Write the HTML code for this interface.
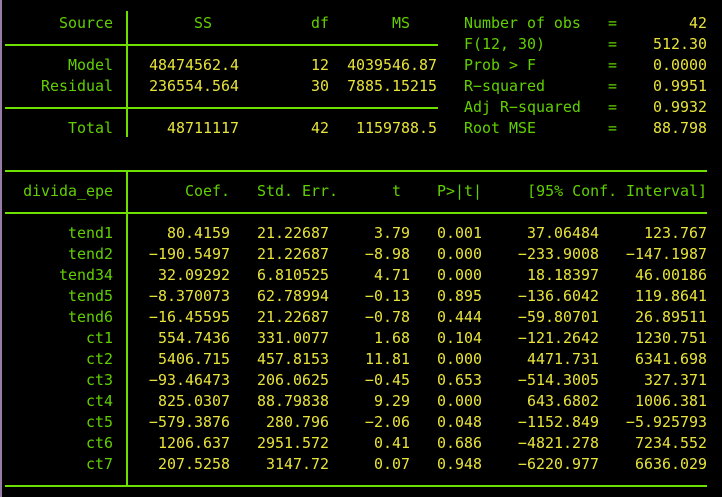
<!DOCTYPE html>
<html><head><meta charset="utf-8"><style>
html,body{margin:0;padding:0;background:#000;width:722px;height:497px;overflow:hidden}
body{position:relative;font-family:"DejaVu Sans Mono","Liberation Mono",monospace;font-size:14.95px;line-height:21px}
.b{position:absolute;left:0;top:0;width:2px;height:497px;background:#9a7aa8}
.h{position:absolute;height:2px;background:#6ee000}
.v{position:absolute;width:2px;background:#6ee000;left:126px}
.r{position:absolute;left:0;width:722px;height:21px}
.r i{position:absolute;font-style:normal;white-space:pre;top:0}
.g{color:#62d000}.y{color:#e8e43a}
.c0{right:609px}.c1{right:492px}.c2{right:393px}.c3{right:312px}.c4{right:240px}.c5{right:123px}.c6{right:15px}
.s1{right:483px}.s2{right:393px}.s3{right:285px}.sl{left:464px}.se{left:608px}
</style></head><body>
<div class="b"></div>
<div class="h" style="left:5px;width:433px;top:44px"></div>
<div class="h" style="left:5px;width:433px;top:107px"></div>
<div class="h" style="left:5px;width:702px;top:170px"></div>
<div class="h" style="left:5px;width:702px;top:212px"></div>
<div class="h" style="left:5px;width:702px;top:485px"></div>
<div class="v" style="top:11px;height:126px"></div>
<div class="v" style="top:170px;height:317px"></div>

<div class="r" style="top:12.5px"><i class="g c0">Source</i><i class="g" style="left:194px">SS</i><i class="g" style="left:311px">df</i><i class="g" style="left:392px">MS</i><i class="g sl">Number of obs</i><i class="g se">=</i><i class="y c6">42</i></div>
<div class="r" style="top:33.5px"><i class="g sl">F(12, 30)</i><i class="g se">=</i><i class="y c6">512.30</i></div>
<div class="r" style="top:54.5px"><i class="g c0">Model</i><i class="y s1">48474562.4</i><i class="y s2">12</i><i class="y s3">4039546.87</i><i class="g sl">Prob &gt; F</i><i class="g se">=</i><i class="y c6">0.0000</i></div>
<div class="r" style="top:75.5px"><i class="g c0">Residual</i><i class="y s1">236554.564</i><i class="y s2">30</i><i class="y s3">7885.15215</i><i class="g sl">R−squared</i><i class="g se">=</i><i class="y c6">0.9951</i></div>
<div class="r" style="top:96.5px"><i class="g sl">Adj R−squared</i><i class="g se">=</i><i class="y c6">0.9932</i></div>
<div class="r" style="top:117.5px"><i class="g c0">Total</i><i class="y s1">48711117</i><i class="y s2">42</i><i class="y s3">1159788.5</i><i class="g sl">Root MSE</i><i class="g se">=</i><i class="y c6">88.798</i></div>

<div class="r" style="top:180.5px"><i class="g c0">divida_epe</i><i class="g c1">Coef.</i><i class="g" style="left:257px">Std. Err.</i><i class="g" style="left:392px">t</i><i class="g" style="left:437px">P&gt;|t|</i><i class="g c6">[95% Conf. Interval]</i></div>

<div class="r" style="top:222.5px"><i class="g c0">tend1</i><i class="y c1">80.4159</i><i class="y c2">21.22687</i><i class="y c3">3.79</i><i class="y c4">0.001</i><i class="y c5">37.06484</i><i class="y c6">123.767</i></div>
<div class="r" style="top:243.5px"><i class="g c0">tend2</i><i class="y c1">−190.5497</i><i class="y c2">21.22687</i><i class="y c3">−8.98</i><i class="y c4">0.000</i><i class="y c5">−233.9008</i><i class="y c6">−147.1987</i></div>
<div class="r" style="top:264.5px"><i class="g c0">tend34</i><i class="y c1">32.09292</i><i class="y c2">6.810525</i><i class="y c3">4.71</i><i class="y c4">0.000</i><i class="y c5">18.18397</i><i class="y c6">46.00186</i></div>
<div class="r" style="top:285.5px"><i class="g c0">tend5</i><i class="y c1">−8.370073</i><i class="y c2">62.78994</i><i class="y c3">−0.13</i><i class="y c4">0.895</i><i class="y c5">−136.6042</i><i class="y c6">119.8641</i></div>
<div class="r" style="top:306.5px"><i class="g c0">tend6</i><i class="y c1">−16.45595</i><i class="y c2">21.22687</i><i class="y c3">−0.78</i><i class="y c4">0.444</i><i class="y c5">−59.80701</i><i class="y c6">26.89511</i></div>
<div class="r" style="top:327.5px"><i class="g c0">ct1</i><i class="y c1">554.7436</i><i class="y c2">331.0077</i><i class="y c3">1.68</i><i class="y c4">0.104</i><i class="y c5">−121.2642</i><i class="y c6">1230.751</i></div>
<div class="r" style="top:348.5px"><i class="g c0">ct2</i><i class="y c1">5406.715</i><i class="y c2">457.8153</i><i class="y c3">11.81</i><i class="y c4">0.000</i><i class="y c5">4471.731</i><i class="y c6">6341.698</i></div>
<div class="r" style="top:369.5px"><i class="g c0">ct3</i><i class="y c1">−93.46473</i><i class="y c2">206.0625</i><i class="y c3">−0.45</i><i class="y c4">0.653</i><i class="y c5">−514.3005</i><i class="y c6">327.371</i></div>
<div class="r" style="top:390.5px"><i class="g c0">ct4</i><i class="y c1">825.0307</i><i class="y c2">88.79838</i><i class="y c3">9.29</i><i class="y c4">0.000</i><i class="y c5">643.6802</i><i class="y c6">1006.381</i></div>
<div class="r" style="top:411.5px"><i class="g c0">ct5</i><i class="y c1">−579.3876</i><i class="y c2">280.796</i><i class="y c3">−2.06</i><i class="y c4">0.048</i><i class="y c5">−1152.849</i><i class="y c6">−5.925793</i></div>
<div class="r" style="top:432.5px"><i class="g c0">ct6</i><i class="y c1">1206.637</i><i class="y c2">2951.572</i><i class="y c3">0.41</i><i class="y c4">0.686</i><i class="y c5">−4821.278</i><i class="y c6">7234.552</i></div>
<div class="r" style="top:453.5px"><i class="g c0">ct7</i><i class="y c1">207.5258</i><i class="y c2">3147.72</i><i class="y c3">0.07</i><i class="y c4">0.948</i><i class="y c5">−6220.977</i><i class="y c6">6636.029</i></div>
</body></html>
